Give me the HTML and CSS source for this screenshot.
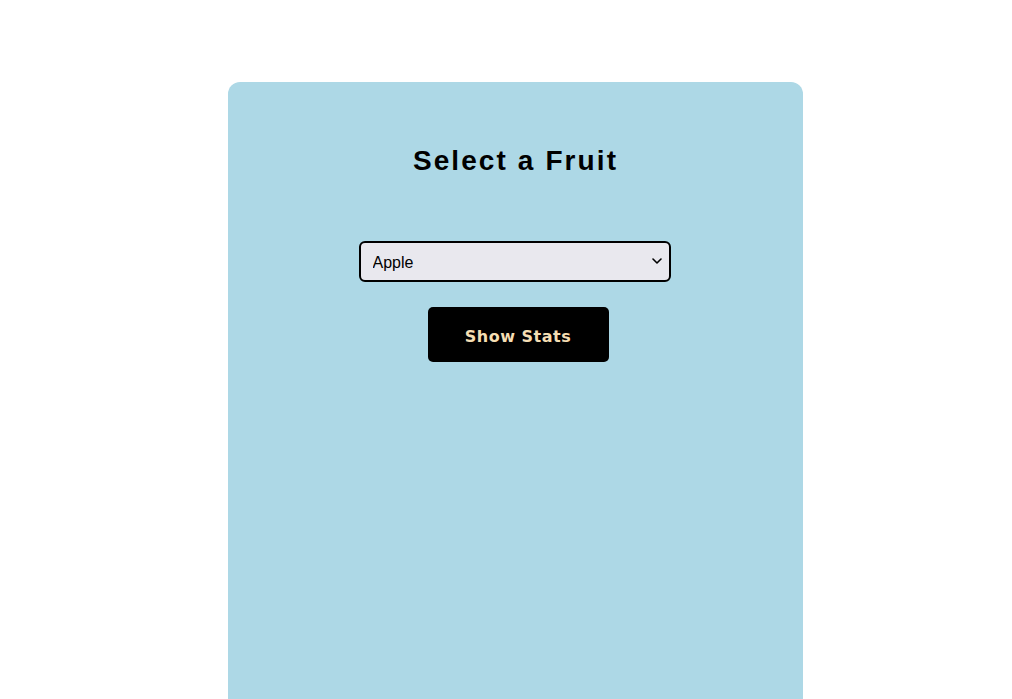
FILE: index.html
```html
<!DOCTYPE html>
<html lang="en">
<head>
<meta charset="utf-8">
<title>Select a Fruit</title>
<link rel="stylesheet" href="styles.css">
</head>
<body>
<main class="card">
  <h1 class="title">Select a Fruit</h1>
  <div class="select-wrap">
    <select class="fruit-select">
      <option>Apple</option>
      <option>Banana</option>
      <option>Orange</option>
    </select>
    <svg class="chevron" width="10" height="6" viewBox="0 0 10 6" aria-hidden="true">
      <path d="M1 1 L5 5 L9 1" fill="none" stroke="#000" stroke-width="1.6" stroke-linecap="round" stroke-linejoin="round"/>
    </svg>
  </div>
  <button class="stats-btn" type="button">Show Stats</button>
</main>
</body>
</html>
```
FILE: styles.css
```css
html, body {
  margin: 0;
  padding: 0;
  background: #ffffff;
  overflow: hidden;
}
body {
  font-family: "Liberation Sans", Arial, sans-serif;
}
.card {
  box-sizing: border-box;
  width: 575px;
  height: 617px;
  margin: 82px 0 0 228px;
  background: #add8e6;
  border-radius: 12px 12px 0 0;
  display: flex;
  flex-direction: column;
  align-items: center;
  padding-top: 63px;
}
.title {
  margin: 0;
  font-family: "Liberation Sans", Arial, sans-serif;
  font-size: 28px;
  line-height: 32px;
  font-weight: 700;
  letter-spacing: 2.1px;
  color: #000;
}
.select-wrap {
  position: relative;
  margin-top: 64px;
  margin-right: 2px;
  width: 312px;
  height: 41px;
}
.fruit-select {
  box-sizing: border-box;
  -webkit-appearance: none;
  appearance: none;
  width: 100%;
  height: 100%;
  margin: 0;
  padding: 2px 30px 0 12px;
  border: 2px solid #000;
  border-radius: 6px;
  background-color: #e9e8ee;
  font-family: "Liberation Sans", Arial, sans-serif;
  font-size: 16px;
  color: #000;
  outline: none;
}
.chevron {
  position: absolute;
  right: 9px;
  top: 17px;
  pointer-events: none;
}
.stats-btn {
  box-sizing: border-box;
  margin-top: 25px;
  margin-left: 5px;
  width: 181px;
  height: 55px;
  padding: 3px 0 0;
  border: none;
  border-radius: 5px;
  background: #000;
  color: #f5deb3;
  font-family: "DejaVu Sans", Verdana, sans-serif;
  font-weight: 700;
  font-size: 16px;
  letter-spacing: 0.5px;
  cursor: pointer;
}
```
